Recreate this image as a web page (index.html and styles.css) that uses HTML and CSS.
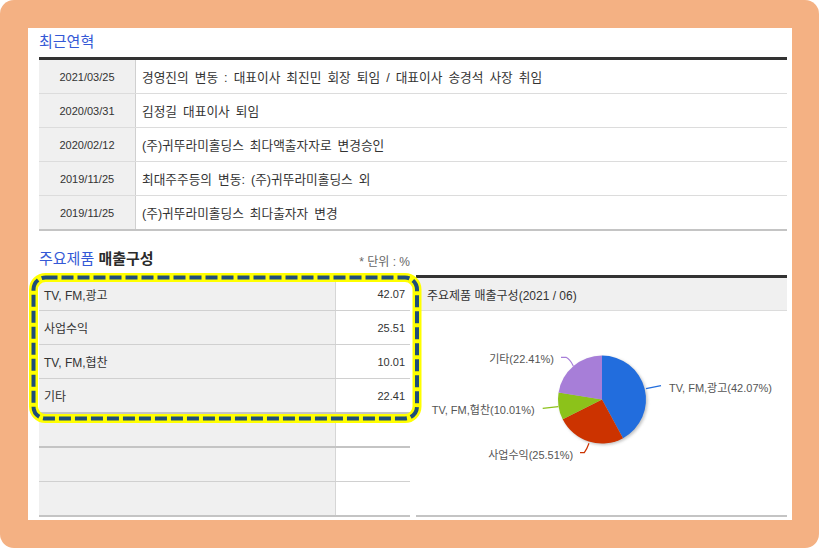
FILE: index.html
```html
<!DOCTYPE html>
<html lang="ko">
<head>
<meta charset="utf-8">
<title>최근연혁</title>
<link rel="stylesheet" href="styles.css">
</head>
<body>
<div class="frame">
  <div class="panel">
    <h2 class="sec-title">최근연혁</h2>
    <div class="hist">
      <div class="hist-row"><div class="hist-date">2021/03/25</div><div class="hist-text">경영진의 변동 : 대표이사 최진민 회장 퇴임 / 대표이사 송경석 사장 취임</div></div>
      <div class="hist-row"><div class="hist-date">2020/03/31</div><div class="hist-text">김정길 대표이사 퇴임</div></div>
      <div class="hist-row"><div class="hist-date">2020/02/12</div><div class="hist-text">(주)귀뚜라미홀딩스 최다액출자자로 변경승인</div></div>
      <div class="hist-row"><div class="hist-date">2019/11/25</div><div class="hist-text">최대주주등의 변동: (주)귀뚜라미홀딩스 외</div></div>
      <div class="hist-row last"><div class="hist-date">2019/11/25</div><div class="hist-text">(주)귀뚜라미홀딩스 최다출자자 변경</div></div>
    </div>

    <div class="sales-head">
      <h3 class="sales-title"><span class="blue">주요제품</span> <b>매출구성</b></h3>
      <span class="unit">* 단위 : %</span>
    </div>

    <div class="sales-grid">
      <div class="sales-table">
        <div class="s-row r32"><div class="s-label">TV, FM,광고</div><div class="s-val">42.07</div></div>
        <div class="s-row"><div class="s-label">사업수익</div><div class="s-val">25.51</div></div>
        <div class="s-row"><div class="s-label">TV, FM,협찬</div><div class="s-val">10.01</div></div>
        <div class="s-row thick"><div class="s-label">기타</div><div class="s-val">22.41</div></div>
        <div class="s-row r32 thick"><div class="s-label"></div><div class="s-val"></div></div>
        <div class="s-row"><div class="s-label"></div><div class="s-val"></div></div>
        <div class="s-row thick"><div class="s-label"></div><div class="s-val"></div></div>
        <svg class="highlight" width="393" height="150" viewBox="0 0 393 150">
          <rect x="4.5" y="4.5" width="383.5" height="141" rx="12" fill="none" stroke="#ffff00" stroke-width="9"/>
          <rect x="4.5" y="4.5" width="383.5" height="141" rx="12" fill="none" stroke="#1f4e79" stroke-width="4" stroke-dasharray="12 4"/>
        </svg>
      </div>

      <div class="chart-box">
        <div class="chart-head">주요제품 매출구성(2021 / 06)</div>
        <div class="chart-area">
          <svg width="371" height="204" viewBox="0 0 371 204">
            <defs>
              <filter id="sh" x="-20%" y="-20%" width="140%" height="140%">
                <feGaussianBlur stdDeviation="1.5"/>
              </filter>
            </defs>
            <circle cx="187.5" cy="90" r="44" fill="#999" opacity="0.6" filter="url(#sh)"/>
            <path d="M186,88.5 L186,44.5 A44,44 0 0 1 207.03,127.15 Z" fill="#226ddd"/>
            <path d="M186,88.5 L207.03,127.15 A44,44 0 0 1 146.69,108.27 Z" fill="#cc3300"/>
            <path d="M186,88.5 L146.69,108.27 A44,44 0 0 1 142.58,81.38 Z" fill="#8cc21a"/>
            <path d="M186,88.5 L142.58,81.38 A44,44 0 0 1 186,44.5 Z" fill="#a77ed8"/>
            <path d="M230,77.7 L245,74.7" stroke="#226ddd" stroke-width="1.2" fill="none"/>
            <path d="M145,46.3 L150,46.3 Q154,48 157.3,55" stroke="#a77ed8" stroke-width="1.2" fill="none"/>
            <path d="M126.7,97.3 L142.3,95.7" stroke="#8cc21a" stroke-width="1.2" fill="none"/>
            <path d="M164,141.7 L168.3,141.7 Q171,138 173,132.3" stroke="#cc3300" stroke-width="1.2" fill="none"/>
            <text class="pie-label" x="253" y="81">TV, FM,광고(42.07%)</text>
            <text class="pie-label" x="138" y="52" text-anchor="end">기타(22.41%)</text>
            <text class="pie-label" x="118.7" y="103" text-anchor="end">TV, FM,협찬(10.01%)</text>
            <text class="pie-label" x="157.3" y="148" text-anchor="end">사업수익(25.51%)</text>
          </svg>
        </div>
      </div>
    </div>
  </div>
</div>
</body>
</html>
```

FILE: styles.css
```css
* { box-sizing: border-box; }
html, body { margin: 0; padding: 0; background: #fff; }
body {
  font-family: "Liberation Sans", "Noto Sans CJK KR", sans-serif;
  color: #333;
}
.frame {
  width: 819px;
  height: 548px;
  padding: 28px 27px 28px 28px;
  background: #f4b183;
  border-radius: 14px;
}
.panel {
  background: #fff;
  height: 100%;
  padding: 0 5px 0 11px;
}
.sec-title {
  margin: 0 0 5px;
  padding-top: 4px;
  font-size: 15px;
  line-height: 20px;
  font-weight: normal;
  color: #3559d6;
}
.hist { border-top: 3px solid #333; }
.hist-row {
  display: grid;
  grid-template-columns: 97px 1fr;
  height: 34px;
  border-bottom: 1px solid #dcdcdc;
}
.hist-row.last { height: 35px; border-bottom: 2px solid #c4c4c4; }
.hist-date {
  background: #f0f0f0;
  border-right: 1px solid #d0d0d0;
  font-size: 11px;
  display: flex;
  align-items: center;
  justify-content: center;
}
.hist-text {
  padding-left: 6px;
  font-size: 12.7px;
  word-spacing: 2.5px;
  display: flex;
  align-items: center;
}
.sales-head {
  width: 371px;
  height: 20px;
  margin: 18px 0 6px;
  display: flex;
  justify-content: space-between;
  align-items: flex-end;
}
.sales-title {
  margin: 0;
  font-size: 15px;
  line-height: 20px;
  font-weight: normal;
  color: #2a2a2a;
}
.sales-title .blue { color: #3559d6; }
.sales-title b { font-weight: bold; }
.unit { font-size: 12px; line-height: 14px; color: #666; }
.sales-grid {
  display: grid;
  grid-template-columns: 371px 371px;
  column-gap: 6px;
}
.sales-table {
  position: relative;
  border-top: 3px solid #333;
}
.s-row {
  display: grid;
  grid-template-columns: 297px 1fr;
  height: 34px;
  border-bottom: 1px solid #d0d0d0;
}
.s-row.r32 { height: 33px; }
.s-row.thick { height: 35px; border-bottom: 2px solid #c4c4c4; }
.s-row.r32.thick { height: 34px; }
.s-label {
  background: #f0f0f0;
  border-right: 1px solid #d6d6d6;
  padding-left: 5px;
  font-size: 12px;
  display: flex;
  align-items: center;
}
.s-val {
  padding-right: 5px;
  font-size: 11px;
  display: flex;
  align-items: center;
  justify-content: flex-end;
}
.highlight {
  position: absolute;
  left: -10px;
  top: -5px;
  pointer-events: none;
}
.chart-box { border-top: 3px solid #333; }
.chart-head {
  height: 33px;
  background: #f0f0f0;
  border-bottom: 1px solid #dcdcdc;
  padding-left: 11px;
  font-size: 12px;
  display: flex;
  align-items: center;
}
.chart-area {
  height: 206px;
  border-bottom: 2px solid #c4c4c4;
}
.chart-area svg { display: block; }
.pie-label {
  font-family: "Liberation Sans", "Noto Sans CJK KR", sans-serif;
  font-size: 11px;
  fill: #555;
}
```
